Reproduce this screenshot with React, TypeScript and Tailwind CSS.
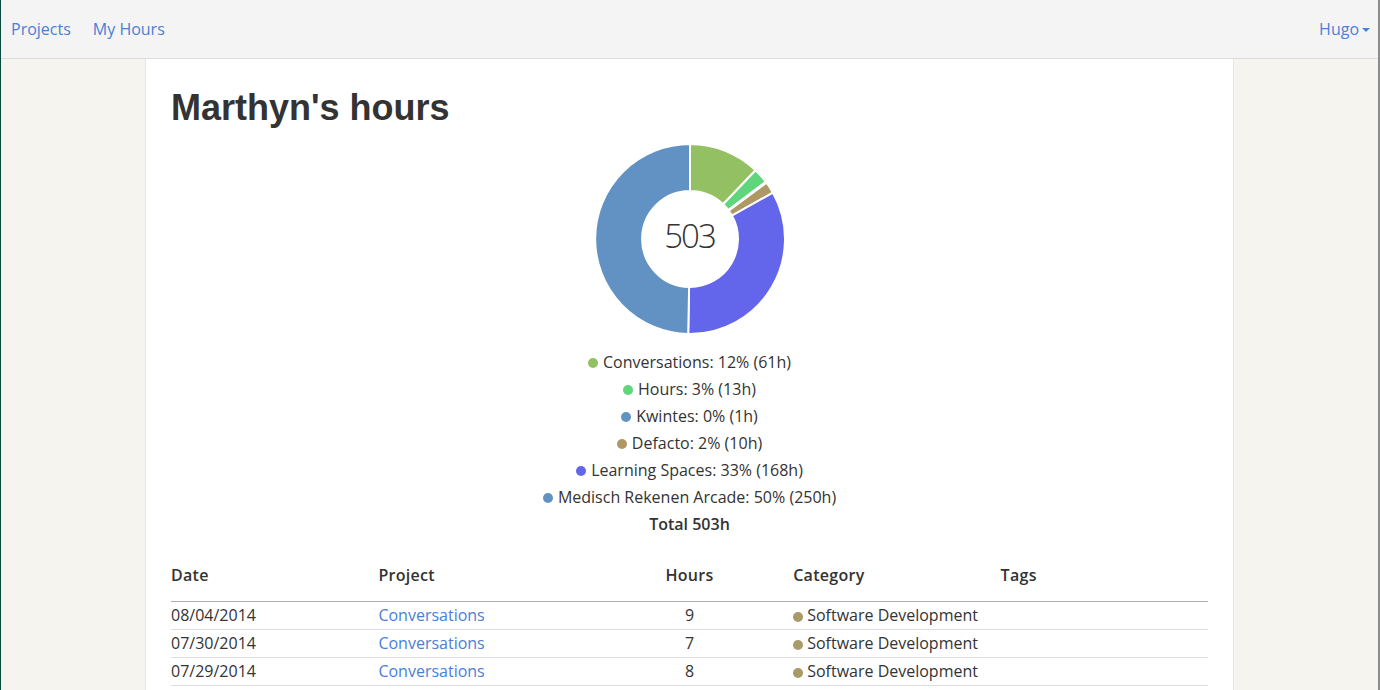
const font = { fontFamily: '"Open Sans", "Liberation Sans", sans-serif' };

const slices = [
  { name: "Conversations", pct: 12, hours: 61, color: "#93c062" },
  { name: "Hours", pct: 3, hours: 13, color: "#5fd67c" },
  { name: "Kwintes", pct: 0, hours: 1, color: "#6193c4" },
  { name: "Defacto", pct: 2, hours: 10, color: "#ae9964" },
  { name: "Learning Spaces", pct: 33, hours: 168, color: "#6366ea" },
  { name: "Medisch Rekenen Arcade", pct: 50, hours: 250, color: "#6192c3" },
];

const rows = [
  { date: "08/04/2014", project: "Conversations", hours: 9, category: "Software Development" },
  { date: "07/30/2014", project: "Conversations", hours: 7, category: "Software Development" },
  { date: "07/29/2014", project: "Conversations", hours: 8, category: "Software Development" },
];

function arc(cx: number, cy: number, r: number, ri: number, a0: number, a1: number) {
  const p = (rad: number, a: number) => {
    const t = ((a - 90) * Math.PI) / 180;
    return `${(cx + rad * Math.cos(t)).toFixed(2)} ${(cy + rad * Math.sin(t)).toFixed(2)}`;
  };
  const large = a1 - a0 > 180 ? 1 : 0;
  return `M ${p(r, a0)} A ${r} ${r} 0 ${large} 1 ${p(r, a1)} L ${p(ri, a1)} A ${ri} ${ri} 0 ${large} 0 ${p(ri, a0)} Z`;
}

function Donut() {
  const total = slices.reduce((s, x) => s + x.hours, 0);
  let acc = 0;
  return (
    <div className="relative w-[192px] h-[192px]">
      <svg width="192" height="192" viewBox="0 0 192 192">
        {slices.map((s) => {
          const a0 = (acc / total) * 360;
          acc += s.hours;
          const a1 = (acc / total) * 360;
          return (
            <path
              key={s.name}
              d={arc(96, 96, 95, 48, a0, a1)}
              fill={s.color}
              stroke="#fff"
              strokeWidth="2"
              strokeLinejoin="round"
            />
          );
        })}
      </svg>
      <div className="absolute inset-0 flex items-center justify-center pb-[7px] text-[33px] font-light tracking-[-2px] text-[#333]">
        503
      </div>
    </div>
  );
}

export default function App() {
  return (
    <div
      className="min-h-screen flex flex-col bg-[#f5f4ef] border-l border-[#0b4a3f] border-r-2 border-r-[#8c8c8c] text-[#333]"
      style={font}
    >
      {/* Navbar */}
      <nav className="h-[59px] shrink-0 flex items-center justify-between pl-[10px] pr-[8px] bg-[#f4f4f4] border-b border-[#dcdcdc] text-[16px] text-[#4a80d5]">
        <div className="flex items-center gap-[22px]">
          <a>Projects</a>
          <a>My Hours</a>
        </div>
        <a className="flex items-center gap-[3px]">
          Hugo
          <span className="w-0 h-0 border-x-[4px] border-x-transparent border-t-[4px] border-t-[#4a80d5] mt-[2px]" />
        </a>
      </nav>

      {/* Card */}
      <div className="flex-1 mx-auto w-[1089px] bg-white border-x border-[#e8e6e0] px-[25px] pt-[29px]">
        <h1
          className="text-[36px] leading-[40px] font-bold text-[#333]"
          style={{ fontFamily: '"Liberation Sans", Arial, sans-serif' }}
        >
          Marthyn's hours
        </h1>

        <div className="flex justify-center mt-[15px]">
          <Donut />
        </div>

        <div className="mt-[14px] flex flex-col items-center text-[16px] leading-[27px]">
          {slices.map((s) => (
            <div key={s.name} className="flex items-center gap-[5px]">
              <span className="w-[10px] h-[10px] rounded-full" style={{ backgroundColor: s.color }} />
              <span>
                {s.name}: {s.pct}% ({s.hours}h)
              </span>
            </div>
          ))}
          <div className="font-semibold">Total 503h</div>
        </div>

        <table className="w-full mt-[12px] table-fixed text-[16px]">
          <thead>
            <tr className="border-b border-[#b0b0b0]">
              <th className="text-left font-semibold py-[12px] leading-[27px] tracking-[0.3px]">Date</th>
              <th className="text-left font-semibold py-[12px] leading-[27px] tracking-[0.3px]">Project</th>
              <th className="text-center font-semibold py-[12px] leading-[27px] tracking-[0.3px]">Hours</th>
              <th className="text-left font-semibold py-[12px] leading-[27px] tracking-[0.3px]">Category</th>
              <th className="text-left font-semibold py-[12px] leading-[27px] tracking-[0.3px]">Tags</th>
            </tr>
          </thead>
          <tbody>
            {rows.map((r) => (
              <tr key={r.date} className="border-b border-[#dddddd]">
                <td className="p-0 h-[27px] leading-[27px]">{r.date}</td>
                <td className="p-0 h-[27px] leading-[27px]">
                  <a className="text-[#4a80d5]">{r.project}</a>
                </td>
                <td className="p-0 h-[27px] leading-[27px] text-center">{r.hours}</td>
                <td className="p-0 h-[27px] leading-[27px]">
                  <span className="inline-block w-[10px] h-[10px] rounded-full bg-[#a99a6a] mr-[4px] align-[-1px]" />
                  {r.category}
                </td>
                <td className="p-0 h-[27px]"></td>
              </tr>
            ))}
          </tbody>
        </table>
      </div>
    </div>
  );
}
